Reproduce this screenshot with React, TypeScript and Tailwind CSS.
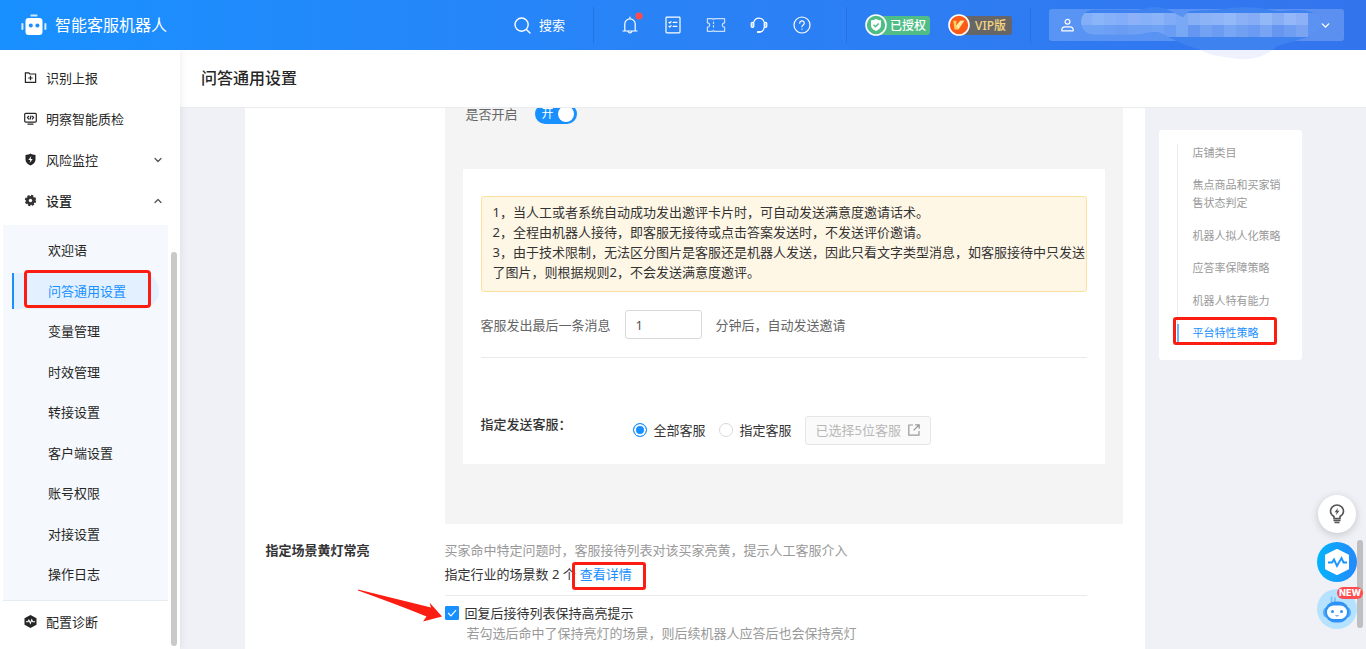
import React from "react";
import { ChevronDown, ChevronUp } from "lucide-react";

const fontStack = "font-['Noto_Sans','Noto_Sans_CJK_SC',sans-serif]";

function RobotLogo() {
  return (
    <svg width="26" height="22" viewBox="0 0 26 22" aria-hidden="true">
      <rect x="9.5" y="0.5" width="7" height="2" rx="0.6" fill="#cfe6ff" />
      <rect x="4.5" y="4" width="17" height="17" rx="3.2" fill="#fff" />
      <rect x="0.4" y="9" width="2" height="7" rx="1" fill="#d9ecff" />
      <rect x="23.4" y="9" width="2" height="7" rx="1" fill="#d9ecff" />
      <circle cx="9.8" cy="11.6" r="2" fill="#1a8dff" />
      <circle cx="16.4" cy="11.6" r="2" fill="#1a8dff" />
    </svg>
  );
}

function HeadIcon({ label, children }: { label: string; children: React.ReactNode }) {
  return (
    <button type="button" aria-label={label} className="relative block h-[18px] w-[18px]">
      <svg
        width="18"
        height="18"
        viewBox="0 0 18 18"
        fill="none"
        stroke="#fff"
        strokeWidth="1.2"
        strokeLinecap="round"
        strokeLinejoin="round"
        className="overflow-visible"
      >
        {children}
      </svg>
    </button>
  );
}

function Divider() {
  return <div className="h-9 w-px bg-[#2472e0]" />;
}

function Header() {
  return (
    <header className="relative z-10 flex h-[50px] shrink-0 items-center justify-between bg-linear-to-r from-[#1890ff] to-[#3374ed] pr-[22px] pl-[21px] text-white">
      <div className="flex items-center gap-2">
        <RobotLogo />
        <span className="text-base leading-6">智能客服机器人</span>
      </div>
      <div className="flex items-center">
        <button type="button" className="flex items-center gap-2 text-[13px] leading-5">
          <svg width="17" height="17" viewBox="0 0 17 17" fill="none" stroke="#fff" strokeWidth="1.4" strokeLinecap="round">
            <circle cx="7.6" cy="7.6" r="6.6" />
            <path d="M12.4 12.4 16 16" />
          </svg>
          搜索
        </button>
        <div className="ml-7">
          <Divider />
        </div>
        <nav className="mr-[35px] ml-[27px] flex items-center gap-[25px]">
          <HeadIcon label="通知">
            <path d="M2 15h14M3.8 14.8V8a5.2 5.2 0 0 1 10.4 0v6.8M9 1.2v1.2M7.2 15.6a1.9 1.9 0 0 0 3.6 0" />
            <circle cx="18" cy="0" r="3.6" fill="#ff4d4f" stroke="none" />
          </HeadIcon>
          <HeadIcon label="任务">
            <rect x="2" y="1.2" width="14" height="15.600" rx="0.8" />
            <path d="M9.2 6.4h3.6M9.2 10.4h3.6M5 6.3l.8.7 1.3-1.4M5 10.3l.8.7 1.3-1.4" />
          </HeadIcon>
          <HeadIcon label="卡券">
            <path
              d="M.4 2.6h5.2l.9 1 .9-1h10.200v4.200a2.200 2.200 0 0 0 0 4.400v4.200H7.400l-.9-1-.9 1H.4v-4.200a2.200 2.200 0 0 0 0-4.400z"
              stroke="#c5defe"
            />
            <path d="M6.500 6v1.400M6.500 9.600V11" stroke="#c5defe" />
          </HeadIcon>
          <HeadIcon label="客服">
            <path d="M3.800 6.400a5.300 5.300 0 0 1 10.400 0M14.200 11.400c-.3 2.700-1.900 4.500-4.600 4.700" />
            <rect x="1.200" y="6.400" width="2.600" height="5" rx="1.200" fill="#a9cdfd" />
            <rect x="14.200" y="6.400" width="2.600" height="5" rx="1.200" fill="#a9cdfd" />
            <path d="M7.800 16.100h2" strokeWidth="2" />
          </HeadIcon>
          <HeadIcon label="帮助">
            <circle cx="9" cy="9" r="8" />
            <path d="M6.700 7.200a2.300 2.300 0 1 1 3.500 1.900c-.8.5-1.200.9-1.200 1.700M9 13v.2" />
          </HeadIcon>
        </nav>
        <Divider />
        <div className="ml-[18px] flex h-[22px] w-[65px] items-center">
          <svg width="22" height="22" viewBox="0 0 22 22" className="relative z-10 shrink-0">
            <circle cx="11" cy="11" r="10" fill="#51bd86" stroke="#fff" strokeWidth="1.600" />
            <path d="M11 5c1.600 1 3.300 1.200 5 1.200v5c0 2.800-2.400 4.700-5 5.800-2.600-1.100-5-3-5-5.800v-5c1.700 0 3.400-.2 5-1.200z" fill="#fff" />
            <path d="m8.500 10.800 2 1.900 3.200-3.300" fill="none" stroke="#51bd86" strokeWidth="1.500" />
          </svg>
          <span className="-ml-3 flex h-[19px] grow items-center rounded-[3px] bg-[#51bd86] pt-px pl-[15px] text-xs leading-4 font-medium whitespace-nowrap">
            已授权
          </span>
        </div>
        <div className="ml-[18px] flex h-[22px] w-16 items-center">
          <svg width="22" height="22" viewBox="0 0 22 22" className="relative z-10 shrink-0">
            <circle cx="11" cy="11" r="10" fill="#fb5b16" stroke="#fff" strokeWidth="1.600" />
            <path d="M5.200 6.800h3.400l-.5 5L12.300 6.800h3.900L10.300 15.400H6.600z" fill="#ffcf5c" />
            <path d="m8.100 11.800 4.200-5h3.900l-5.900 8.600z" fill="#ffe9a3" />
          </svg>
          <span className="-ml-3 flex h-[19px] grow items-center rounded-[3px] bg-[#666669] pt-px pl-[17px] text-xs leading-4 font-medium whitespace-nowrap text-[#f8d77c]">
            VIP版
          </span>
        </div>
        <div className="mx-[18px]">
          <Divider />
        </div>
        <button
          type="button"
          aria-label="账户"
          className="relative flex h-8 w-[295px] items-center justify-between rounded-[3px] bg-white/20 px-3"
        >
          <svg width="13" height="14" viewBox="0 0 13 14" fill="none" stroke="#fff" strokeWidth="1.200">
            <circle cx="6.500" cy="3.800" r="2.400" />
            <path d="M.8 12.800v-.8c0-2 1.400-3.200 3.200-3.200h5c1.800 0 3.200 1.200 3.200 3.200v.8z" strokeLinejoin="round" />
          </svg>
          <AccountSmudge />
          <ChevronDown size={13} strokeWidth={2.600} className="relative z-10" />
        </button>
      </div>
    </header>
  );
}

const mosaic = [
  "#83aef8", "#8ab5f9", "#86b0f8", "#83adf8", "#8cb1f8", "#86b0f8", "#8bb3f8", "#80abf6", "#7ba8f5", "#86aff6",
  "#8db3f7", "#8fb4f7", "#94b9f8", "#8bb0f6", "#85acf5", "#93b8f8", "#87adf5", "#93b7f8", "#8eb0f6",
];

const mosaicLow = [
  "#6ea2f5", "#6ea2f5", "#6c9ff4", "#6a9cf4", "#6d9ff3", "#6da0f4", "#6fa2f4", "#699cf3", "#78a7f4", "#6597f1",
  "#73a2f3", "#6b9cf2", "#78a6f4", "#719ff2", "#6a9af1", "#78a4f3", "#6796f0", "#6f9df2", "#7aa3f2",
];

function AccountSmudge() {
  return (
    <svg width="242" height="54" viewBox="0 0 242 54" className="absolute -top-[3px] left-[32px]" aria-hidden="true">
      <defs>
        <clipPath id="smudge">
          <path d="M0 16C0 9 5 3.700 14 3.700H57C63 3.700 67 1 74 1C79 1 83 2 87 3.700L102 11.300L105 7.500C106.500 5.500 109 5 113 4.700L137 3.700C147 2.500 154 1.300 164 1.300C176 1.300 185 3 194 4.700C202 6 208 3.500 218 4C232 5 241 8 241 17C241 24 236 28 227 31L197 40C195 41 194 42 192 43.700C183 50 174 53 162 53C152 53 146 51 137 50C130 49 124 46 117 43C106 40 96 35 87 31C82 28 79 26 74 26C68 26 61 28.700 54 28.700H14C5 28.700 0 23 0 16Z" />
        </clipPath>
      </defs>
      <g clipPath="url(#smudge)">
        <rect width="242" height="44" fill="#3e82ef" />
        <rect y="7" width="242" height="24" fill="#5c92f1" />
        <rect y="44" width="242" height="10" fill="#edf2fe" />
        {mosaic.map((color, i) => (
          <g key={i}>
            <rect x={i * 12 - 1} y="7" width="12" height="12" fill={color} />
            <rect x={i * 12 - 1} y="19" width="12" height="12" fill={mosaicLow[i]} />
          </g>
        ))}
      </g>
    </svg>
  );
}

function NavRow({
  label,
  icon,
  arrow,
  strong,
}: {
  label: string;
  icon: React.ReactNode;
  arrow?: "up" | "down";
  strong?: boolean;
}) {
  return (
    <a href="#" className="flex h-[41px] items-center pr-4 pl-6 text-[13px] leading-5 text-[#262626]">
      <svg width="13" height="13" viewBox="0 0 13 13" fill="none" stroke="#262626" strokeWidth="1.200" className="shrink-0">
        {icon}
      </svg>
      <span className={strong ? "ml-[9px] grow font-medium" : "ml-[9px] grow"}>{label}</span>
      {arrow === "down" && <ChevronDown size={12} strokeWidth={2.600} className="text-[#555]" />}
      {arrow === "up" && <ChevronUp size={12} strokeWidth={2.600} className="text-[#555]" />}
    </a>
  );
}

const subItems = ["欢迎语", "问答通用设置", "变量管理", "时效管理", "转接设置", "客户端设置", "账号权限", "对接设置", "操作日志"];

function Sidebar() {
  return (
    <aside className="relative z-[5] w-[180px] shrink-0 overflow-hidden bg-white pt-[7px] shadow-[2px_0_6px_rgba(0,0,0,0.06)]">
      <NavRow
        label="识别上报"
        icon={
          <>
            <path d="M1.400 11.400V1.800h3.400l1 1.200h5.800v8.400z" />
            <path d="M6.500 4.800v4.400M4.300 7h4.400" />
          </>
        }
      />
      <NavRow
        label="明察智能质检"
        icon={
          <>
            <rect x="0.700" y="1.300" width="11.600" height="8.800" rx="1" />
            <path d="M3.500 12.200h6M5 3.800 3.400 5.600 5 7.400M8 3.800l1.600 1.800L8 7.400M7 3.600 6 7.700" />
          </>
        }
      />
      <NavRow
        label="风险监控"
        arrow="down"
        icon={
          <>
            <path d="M6.500.6c1.500 1 3.200 1.400 5 1.500v4.600c0 2.700-2.300 4.500-5 5.700-2.700-1.200-5-3-5-5.700V2.100c1.800-.1 3.500-.5 5-1.500z" fill="#262626" stroke="none" />
            <path d="M7.300 3 4.300 7h2l-.6 3 3-4h-2z" fill="#fff" stroke="none" />
          </>
        }
      />
      <NavRow
        label="设置"
        arrow="up"
        strong
        icon={
          <>
            <circle cx="6.500" cy="6.500" r="4.600" fill="#333" stroke="none" />
            <circle cx="6.500" cy="6.500" r="4.700" stroke="#333" strokeWidth="2" strokeDasharray="2.200 1.490" />
            <circle cx="6.500" cy="6.500" r="1.700" fill="#fff" stroke="none" />
          </>
        }
      />
      <ul className="mt-1 mr-3 ml-[3px] flex h-[376px] flex-col justify-between border-b border-[#e4ebf1] bg-[#f5f9fd] pt-[7px] pb-2 text-[13px] leading-5">
        {subItems.map((item) =>
          item === "问答通用设置" ? (
            <li key={item} className="relative">
              <a
                href="#"
                aria-current="page"
                className="mx-[9px] flex h-9 items-center rounded-r-full border-l-2 border-[#1890ff] bg-[#e2f0ff] pl-[34px] text-[#1890ff]"
              >
                {item}
              </a>
              <span className="pointer-events-none absolute -top-[3px] right-[17px] left-[21px] h-[38px] rounded-[4px] border-3 border-[#fc1d12]" />
            </li>
          ) : (
            <li key={item}>
              <a href="#" className="flex h-9 items-center pl-[45px] text-[#262626]">
                {item}
              </a>
            </li>
          ),
        )}
      </ul>
      <NavRow
        label="配置诊断"
        icon={
          <>
            <path d="M6.500 0 12.500 3.200v6.600L6.500 13l-6-3.200V3.200z" fill="#262626" stroke="none" />
            <path d="M2 6.800h1.800l1-1.600 1.600 3 1.300-3.400 1.100 2H11" stroke="#fff" strokeWidth="1.100" />
          </>
        }
      />
      <div className="absolute top-[202px] right-[3px] bottom-[3px] w-1.5 rounded-full bg-[#c9c9c9]" />
    </aside>
  );
}

function InviteCard() {
  return (
    <div className="mx-[18px] mt-[45px] bg-white px-[18px] pt-[27px] pb-[18px]">
      <div className="rounded-[3px] border border-[#fbe0a0] bg-[#fff7e6] pt-[5px] pb-[9px] pl-[11px] leading-5 text-[#333]">
        <p>1，当人工或者系统自动成功发出邀评卡片时，可自动发送满意度邀请话术。</p>
        <p>2，全程由机器人接待，即客服无接待或点击答案发送时，不发送评价邀请。</p>
        <p className="whitespace-nowrap">
          3，由于技术限制，无法区分图片是客服还是机器人发送，因此只看文字类型消息，如客服接待中只发送
          <br />
          了图片，则根据规则2，不会发送满意度邀评。
        </p>
      </div>
      <div className="mt-[18px] flex items-center gap-3.5 text-[#666]">
        <label htmlFor="delay">客服发出最后一条消息</label>
        <input
          id="delay"
          type="text"
          defaultValue="1"
          className="h-[29px] w-[77px] rounded-[3px] border border-[#d9d9d9] bg-white px-2.5 text-[13px] text-[#555] outline-none"
        />
        <span>分钟后，自动发送邀请</span>
      </div>
      <hr className="mt-[18px] border-[#ebebeb]" />
      <fieldset className="mt-[56px] flex items-center text-[#333]">
        <span className="mb-3 w-[152px] font-medium">指定发送客服：</span>
        <label className="flex items-center gap-[7px]">
          <input
            type="radio"
            name="staff"
            defaultChecked
            className="h-3.5 w-3.5 appearance-none rounded-full border border-[#d9d9d9] bg-white checked:border-[#1890ff] checked:bg-[#1890ff] checked:shadow-[inset_0_0_0_2px_white]"
          />
          全部客服
        </label>
        <label className="ml-[13px] flex items-center gap-[7px]">
          <input
            type="radio"
            name="staff"
            className="h-3.5 w-3.5 appearance-none rounded-full border border-[#d9d9d9] bg-white checked:border-[#1890ff] checked:bg-[#1890ff] checked:shadow-[inset_0_0_0_2px_white]"
          />
          指定客服
        </label>
        <button
          type="button"
          disabled
          className="ml-[13px] flex h-[29px] w-[126px] items-center justify-between rounded-[3px] border border-[#e6e6e6] bg-[#fafafa] px-2.5 leading-5 text-[#b8b8b8]"
        >
          已选择5位客服
          <svg width="12" height="12" viewBox="0 0 12 12" fill="none" stroke="#999" strokeWidth="1.200">
            <path d="M5 1H.8v10.200H11V7M7.200.8h4v4M11 1 5.600 6.400" />
          </svg>
        </button>
      </fieldset>
    </div>
  );
}

function SceneSection() {
  return (
    <section className="flex pt-4 text-[13px] leading-5">
      <h2 className="w-[200px] shrink-0 pl-[21px] font-semibold text-[#333]">指定场景黄灯常亮</h2>
      <div className="relative grow">
        <p className="text-[#999]">买家命中特定问题时，客服接待列表对该买家亮黄，提示人工客服介入</p>
        <p className="mt-1 text-[#333]">
          指定行业的场景数 2 个
          <span className="relative ml-1 inline-block">
            <a href="#" className="text-[#1890ff]">
              查看详情
            </a>
            <span className="pointer-events-none absolute -top-0.5 -right-3.5 -left-2 h-7 rounded-[3px] border-3 border-[#fc1d12]" />
          </span>
        </p>
        <hr className="mt-[11px] mr-9 border-[#ebebeb]" />
        <label className="mt-[7px] flex items-center gap-1.5 text-[#333]">
          <span className="relative h-3.5 w-3.5">
            <input type="checkbox" defaultChecked className="peer block h-3.5 w-3.5 appearance-none rounded-[1px] border border-[#d9d9d9] checked:border-[#1890ff] checked:bg-[#1890ff]" />
            <svg viewBox="0 0 14 14" className="pointer-events-none absolute inset-0 hidden peer-checked:block" fill="none" stroke="#fff" strokeWidth="1.200">
              <path d="m3.200 7 2.700 2.800L11 4.200" />
            </svg>
          </span>
          回复后接待列表保持高亮提示
        </label>
        <p className="pl-[22px] text-[#999]">若勾选后命中了保持亮灯的场景，则后续机器人应答后也会保持亮灯</p>
        <svg width="86" height="36" viewBox="0 0 86 36" className="pointer-events-none absolute top-12 -left-[88px]" aria-hidden="true">
          <path d="M1 1.500 74 19.500 72.500 14.500 85 28.500 66 33.500 69.500 28.500Q44 18 1 2.500z" fill="#fc1d12" />
        </svg>
      </div>
    </section>
  );
}

const anchors = ["店铺类目", "焦点商品和买家销售状态判定", "机器人拟人化策略", "应答率保障策略", "机器人特有能力"];

function AnchorPanel() {
  return (
    <nav className="mt-[22px] w-[143px] shrink-0 self-start rounded-[3px] bg-white px-[18px] pt-3.5 pb-[18px]">
      <ul className="flex h-[198px] flex-col justify-between border-l border-[#ebebeb] pl-[15px] text-[11px] leading-[18px] text-[#999]">
        {anchors.map((item) => (
          <li key={item}>
            <a href="#" className="block">
              {item}
            </a>
          </li>
        ))}
        <li className="relative -ml-4 border-l-2 border-[#6ab5ff] pl-3.5">
          <a href="#" className="block text-[#1890ff]">
            平台特性策略
          </a>
          <span className="pointer-events-none absolute -top-[7px] -left-1.5 h-7 w-[104px] rounded-[3px] border-3 border-[#fc1d12]" />
        </li>
      </ul>
    </nav>
  );
}

function FloatingTools() {
  return (
    <div className="absolute right-[9px] bottom-5 z-20 flex flex-col items-center gap-[7px]">
      <button type="button" aria-label="建议" className="mb-0.5 flex h-[38px] w-[38px] items-center justify-center rounded-full bg-white shadow-[0_2px_8px_rgba(0,0,0,0.18)]">
        <svg width="16" height="20" viewBox="0 0 16 20" fill="none" stroke="#555" strokeWidth="1.600">
          <path d="M5 14.500v-2C3 11.400 1.500 9.600 1.500 7.300a6.500 6.300 0 0 1 13 0c0 2.300-1.500 4.100-3.500 5.200v2z" />
          <path d="M4.500 16.400h7M5.500 18.500h5" />
          <path d="M8.800 4 5.600 8.200h2l-.5 3 3.300-4.400h-2z" fill="#555" stroke="none" />
        </svg>
      </button>
      <button type="button" aria-label="诊断" className="block h-10 w-10">
        <svg width="40" height="40" viewBox="0 0 40 40">
          <defs>
            <linearGradient id="pulse" x1="0" x2="1">
              <stop offset="0" stopColor="#04b4fb" />
              <stop offset="1" stopColor="#2388fd" />
            </linearGradient>
          </defs>
          <circle cx="20" cy="20" r="20" fill="url(#pulse)" />
          <path d="M20 8 31 13.500v13L20 32 9 26.500v-13z" fill="#fff" stroke="#fff" strokeWidth="2" strokeLinejoin="round" />
          <path d="M11 20.500h4l2-3 3 6.500 4.500-8 2 4.500H30" fill="none" stroke="#1797fd" strokeWidth="1.900" />
        </svg>
      </button>
      <button type="button" aria-label="智能助手" className="relative block h-10 w-10">
        <svg width="40" height="40" viewBox="0 0 40 40">
          <circle cx="20" cy="20" r="20" fill="#b5e2ff" />
          <path d="M14.500 13V7.500M18 13V8.500" stroke="#79bff5" strokeWidth="1.600" />
          <rect x="6" y="18" width="28" height="11" rx="5" fill="#53adfa" />
          <rect x="8" y="12.500" width="24" height="21" rx="10" fill="#2f92f6" />
          <rect x="10" y="16.500" width="20" height="13.500" rx="6.500" fill="#fff" />
          <circle cx="15.500" cy="22.500" r="1.500" fill="#2f92f6" />
          <circle cx="24.500" cy="22.500" r="1.500" fill="#2f92f6" />
          <path d="M18.500 26.500q1.500 1 3 0" fill="none" stroke="#2f92f6" />
        </svg>
        <span className="absolute -top-0.5 -right-1.5 flex h-3 w-[26px] items-center justify-center rounded-full bg-[#ff4d4f] font-['Inter',sans-serif] text-[9px] leading-3 font-extrabold text-white">
          NEW
        </span>
      </button>
    </div>
  );
}

export default function App() {
  return (
    <div className={`flex h-screen flex-col overflow-hidden bg-[#eff1f6] text-[13px] leading-5 ${fontStack}`}>
      <Header />
      <div className="relative flex min-h-0 grow">
        <Sidebar />
        <main className="flex min-w-0 grow flex-col">
          <div className="flex h-[58px] shrink-0 items-center border-b border-[#ebecf0] bg-white px-[21px] pb-0.5">
            <h1 className="text-base leading-6 font-medium text-[#262626]">问答通用设置</h1>
          </div>
          <div className="min-h-0 grow overflow-hidden">
            <div className="mx-auto flex h-full max-w-[1057px] gap-3.5">
              <div className="min-w-0 grow bg-white pr-[22px]">
                <div className="-mt-1 ml-[200px] bg-[#f4f4f4] pb-[60px]">
                  <div className="flex h-5 items-center gap-[17px] pl-[21px] text-[#666]">
                    <span>是否开启</span>
                    <button
                      type="button"
                      role="switch"
                      aria-checked="true"
                      aria-label="是否开启"
                      className="flex h-5 w-[42px] items-center justify-between rounded-full bg-[#1890ff] pr-[3px] pl-[7px] text-xs leading-4 text-white"
                    >
                      开<span className="h-4 w-4 rounded-full bg-white" />
                    </button>
                  </div>
                  <InviteCard />
                </div>
                <SceneSection />
              </div>
              <AnchorPanel />
            </div>
          </div>
        </main>
        <div className="absolute right-[3px] bottom-[21px] h-[88px] w-1.5 rounded-full bg-[#bfbfc1]" />
        <FloatingTools />
      </div>
    </div>
  );
}
